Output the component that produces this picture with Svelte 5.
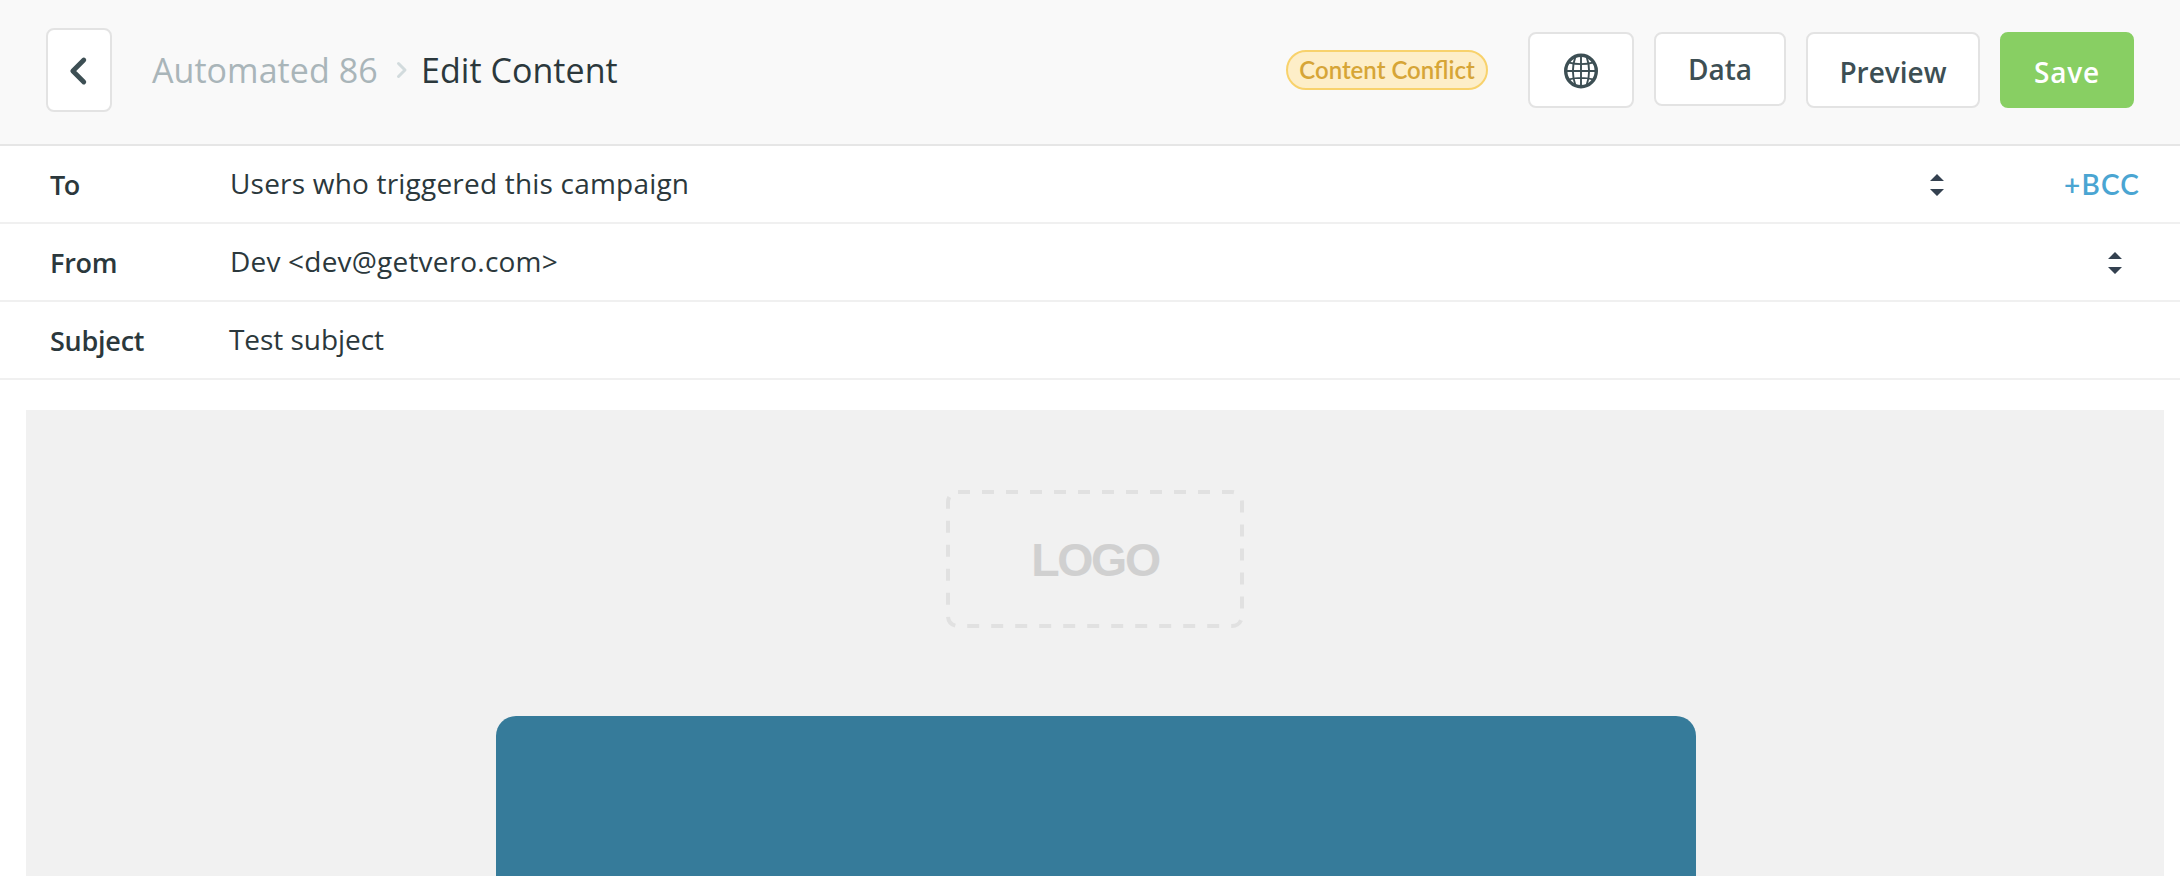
<script>
  const fields = [
    { label: 'To', value: 'Users who triggered this campaign', spacing: 0.2, sort: true, bcc: true },
    { label: 'From', value: 'Dev <dev@getvero.com>', spacing: 0.2, sort: true, bcc: false },
    { label: 'Subject', value: 'Test subject', spacing: -0.05, sort: false, bcc: false }
  ];
</script>

<div class="page">
  <header>
    <button class="back" aria-label="Back">
      <svg width="62" height="80" viewBox="2 2 62 80" fill="none" stroke="#3d4f54" stroke-width="4.8" stroke-linecap="round" stroke-linejoin="round">
        <path d="M37.8 32 26.8 43l11 11" />
      </svg>
    </button>
    <nav>
      <span class="parent">Automated 86</span>
      <svg class="sep" width="12" height="20" viewBox="0 0 12 20" fill="none" stroke="#d2dbdd" stroke-width="3" stroke-linecap="round" stroke-linejoin="round">
        <path d="M2.5 3.5 9 10l-6.5 6.5" />
      </svg>
      <span class="current">Edit Content</span>
    </nav>
    <div class="actions">
      <span class="badge">Content Conflict</span>
      <button class="btn globe" aria-label="Language">
        <svg width="34" height="36" viewBox="0 0 34 36" fill="none" stroke="#3d4f54">
          <ellipse cx="17" cy="18" rx="15.3" ry="15.8" stroke-width="3.4" />
          <g stroke-width="1.9">
            <path d="M17 2v32M1 18h32M5 9.6q12 3 24 0M5 26.4q12-3 24 0" />
            <path d="M11.4 3.6q-5 14.4 0 28.8M22.6 3.6q5 14.4 0 28.8" />
          </g>
        </svg>
      </button>
      <button class="btn data">Data</button>
      <button class="btn preview">Preview</button>
      <button class="btn save">Save</button>
    </div>
  </header>

  {#each fields as f}
    <div class="row">
      <span class="label" class:tight={f.label === 'To'}>{f.label}</span>
      <span class="value" class:input={f.label === 'Subject'} style="letter-spacing: {f.spacing}px">{f.value}</span>
      {#if f.sort}
        <svg class="sort" width="14" height="22" viewBox="0 0 14 22" fill="#344150">
          <path d="M0 7 7 0l7 7zM0 15h14l-7 7z" />
        </svg>
      {/if}
      {#if f.bcc}<span class="bcc">+BCC</span>{/if}
    </div>
  {/each}

  <main>
    <div class="logo">
      <svg width="298" height="138" viewBox="0 0 298 138" fill="none" stroke="#e1e1e1" stroke-width="4" stroke-dasharray="12 12">
        <rect x="2" y="2" width="294" height="134" rx="10" />
      </svg>
      <span>LOGO</span>
    </div>
    <div class="card"></div>
  </main>
</div>

<style>
  :global(body) { background: #fff; overflow: hidden; }
  .page {
    width: 2180px;
    height: 876px;
    overflow: hidden;
    display: flex;
    flex-direction: column;
    box-sizing: border-box;
    font-family: 'Open Sans', sans-serif;
    color: #2b383c;
  }
  svg { display: block; flex: none; }
  button { font: inherit; margin: 0; padding: 0; box-sizing: border-box; }
  header {
    flex: none;
    box-sizing: border-box;
    height: 146px;
    display: flex;
    align-items: flex-start;
    padding: 28px 46px 0;
    background: #f9f9f9;
    border-bottom: 2px solid #e6e6e6;
  }
  .back {
    width: 66px;
    height: 84px;
    border: 2px solid #e3e3e3;
    border-radius: 8px;
    background: #fff;
    display: flex;
    align-items: center;
    justify-content: center;
  }
  nav {
    margin: 22px 0 0 40px;
    display: flex;
    align-items: center;
    font-size: 34px;
    line-height: 40px;
    white-space: nowrap;
  }
  .parent { width: 244px; color: #a9b5b9; letter-spacing: 0.05px; }
  .sep { margin: 0 13px 0 0; }
  .current { letter-spacing: 0.05px; }
  .actions {
    margin: 4px 0 0 auto;
    display: flex;
    align-items: flex-start;
    gap: 20px;
  }
  .badge {
    box-sizing: border-box;
    width: 202px;
    height: 40px;
    margin: 18px 20px 0 0;
    border: 2px solid #f8d26c;
    border-radius: 20px;
    background: #fdeec8;
    color: #d6a537;
    font: 600 24px/35px Lato, sans-serif;
    text-align: center;
    white-space: nowrap;
  }
  .btn {
    height: 76px;
    display: flex;
    align-items: center;
    justify-content: center;
    border: 2px solid #e3e3e3;
    border-radius: 8px;
    background: #fff;
    color: #3d4f54;
    font-size: 28px;
    font-weight: 600;
    line-height: 36px;
  }
  .globe { width: 106px; padding-top: 2px; }
  .data { width: 132px; height: 74px; }
  .preview { width: 174px; padding-top: 3px; }
  .save {
    width: 134px;
    padding-top: 3px;
    border-color: #88cf63;
    background: #88cf63;
    color: #fff;
    letter-spacing: 0.8px;
  }
  .row {
    flex: none;
    box-sizing: border-box;
    height: 78px;
    display: flex;
    align-items: center;
    padding: 0 41px 0 50px;
    border-bottom: 2px solid #f0f0f0;
    font-size: 28px;
    line-height: 36px;
  }
  .label { width: 180px; margin-top: 1px; font-size: 27px; font-weight: 600; letter-spacing: -0.25px; }
  .label.tight { letter-spacing: -1.5px; }
  .value { flex: 1; margin-top: -2px; }
  .value.input { margin-left: -1px; }
  .sort { margin: 1px 17px 0 0; }
  .bcc {
    width: 75px;
    margin: -1px 0 0 103px;
    color: #4aa5d2;
    font-family: Lato, sans-serif;
    font-weight: 600;
    letter-spacing: 1.2px;
    white-space: nowrap;
  }
  main {
    flex: 1;
    margin: 30px 16px 0 26px;
    padding-top: 80px;
    display: flex;
    flex-direction: column;
    align-items: center;
    background: #f1f1f1;
  }
  .logo { display: grid; place-items: center; }
  .logo > * { grid-area: 1 / 1; }
  .logo span {
    padding-top: 2px;
    color: #d0d0d0;
    font: 700 46.5px/54px 'Liberation Sans', sans-serif;
    letter-spacing: -2.4px;
  }
  .card {
    flex: 1;
    width: 1200px;
    margin: 88px 0 0 2px;
    border-radius: 20px 20px 0 0;
    background: #367b9a;
  }
</style>
